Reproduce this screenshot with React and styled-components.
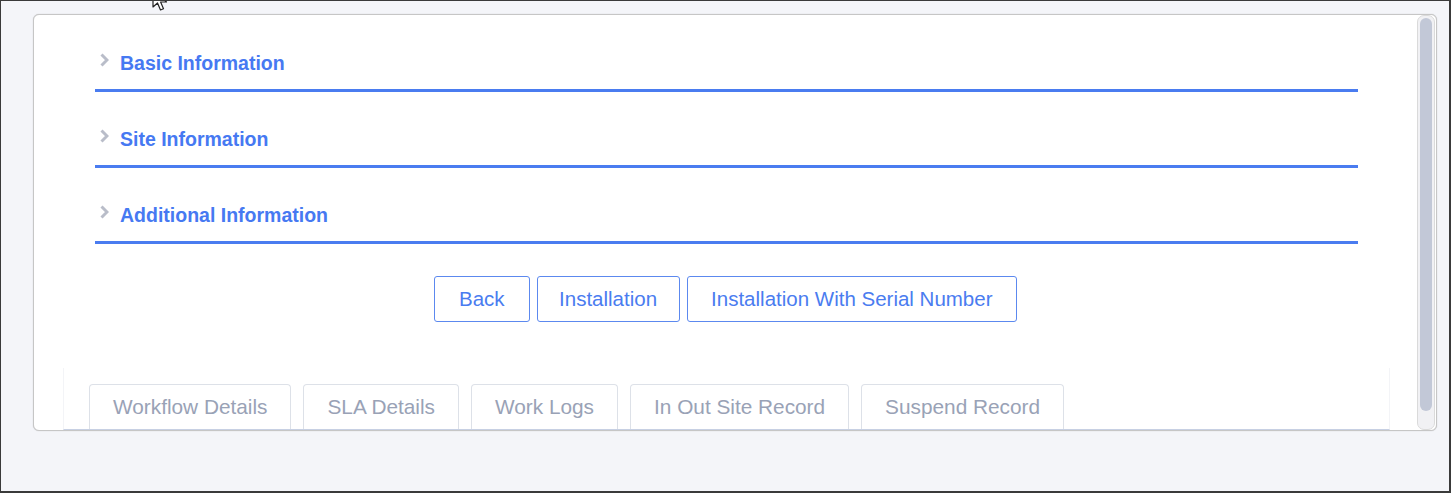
import React from 'react';
import styled, { createGlobalStyle } from 'styled-components';

const GlobalStyle = createGlobalStyle`
  body {
    margin: 0;
    font-family: "Liberation Sans", Arial, sans-serif;
  }
  * {
    box-sizing: border-box;
  }
`;

const Frame = styled.div`
  position: relative;
  width: 1451px;
  height: 493px;
  border: 1px solid #3a3a3a;
  border-right-width: 2px;
  border-bottom-width: 2px;
  background: #f4f5f9;
  padding: 13px 12px 0 32px;
  overflow: hidden;
`;

const Card = styled.div`
  display: flex;
  width: 1404px;
  height: 417px;
  background: #fff;
  border: 1px solid #c6c6c6;
  border-radius: 6px;
  box-shadow: 0 0 1px rgba(0, 0, 0, 0.25);
  overflow: hidden;
`;

const Content = styled.div`
  flex: 1;
  overflow: hidden;
  padding-top: 1px;
`;

const Sections = styled.div`
  padding: 0 59px 0 61px;
`;

const SectionHeader = styled.div`
  display: flex;
  align-items: flex-end;
  gap: 11px;
  height: 76px;
  padding: 0 0 15px 4px;
  border-bottom: 3px solid #4a7cf0;
  cursor: pointer;
`;

const Title = styled.span`
  font-size: 19.5px;
  line-height: 22px;
  font-weight: 700;
  color: #4679f2;
`;

const Chevron = styled.svg`
  width: 10px;
  height: 16px;
  margin-bottom: 6px;
`;

const Actions = styled.div`
  display: flex;
  justify-content: center;
  gap: 7px;
  margin-top: 32px;
`;

const Button = styled.button`
  height: 46px;
  padding: 0 ${p => p.$pad}px;
  background: #fff;
  border: 1px solid #5c89ef;
  border-radius: 3px;
  color: #4a7cf0;
  font-family: "Liberation Sans", Arial, sans-serif;
  font-size: 20.5px;
`;

const TabBar = styled.div`
  display: flex;
  gap: 12px;
  margin: 46px 27px 0 29px;
  padding: 16px 0 0 25px;
  border-left: 1px solid #f3f4f7;
  border-right: 1px solid #f3f4f7;
  border-bottom: 1px solid #c7d0e3;
`;

const Tab = styled.div`
  display: flex;
  align-items: center;
  height: 45px;
  padding: 0 23px;
  border: 1px solid #dde1e8;
  border-bottom: none;
  border-radius: 4px 4px 0 0;
  color: #99a2b6;
  font-size: 20.8px;
  white-space: nowrap;
`;

const ScrollTrack = styled.div`
  width: 18px;
  margin: 0 1px 0 0;
  padding: 2px 2px;
  background: #f1f1f4;
  border: 1px solid #dadada;
  border-radius: 7px;
`;

const Thumb = styled.div`
  height: 393px;
  background: #c2c8d7;
  border-radius: 7px;
`;

const Cursor = styled.svg`
  position: absolute;
  left: 150px;
  top: -13px;
  width: 20px;
  height: 26px;
`;

const sections = ['Basic Information', 'Site Information', 'Additional Information'];
const buttons = [
  { label: 'Back', pad: 24 },
  { label: 'Installation', pad: 21.5 },
  { label: 'Installation With Serial Number', pad: 23.5 },
];
const tabs = ['Workflow Details', 'SLA Details', 'Work Logs', 'In Out Site Record', 'Suspend Record'];

const App = () => {
  return (
    <Frame>
      <GlobalStyle />
      <Card>
        <Content>
          <Sections>
            {sections.map(name => (
              <SectionHeader key={name}>
                <Chevron viewBox="0 0 10 16">
                  <path d="M2.5 2.5 L8 8 L2.5 13.5" fill="none" stroke="#b9bdc9" strokeWidth="3" />
                </Chevron>
                <Title>{name}</Title>
              </SectionHeader>
            ))}
          </Sections>
          <Actions>
            {buttons.map(b => (
              <Button key={b.label} $pad={b.pad}>{b.label}</Button>
            ))}
          </Actions>
          <TabBar>
            {tabs.map(label => (
              <Tab key={label}>{label}</Tab>
            ))}
          </TabBar>
        </Content>
        <ScrollTrack>
          <Thumb />
        </ScrollTrack>
      </Card>
      {/* mouse pointer caught in the screenshot */}
      <Cursor viewBox="0 0 20 26">
        <path d="M2 1 L2 19 L6.5 15 L9.5 22 L12.5 20.8 L9.6 14 L15.5 14 Z" fill="#fff" stroke="#222" strokeWidth="1.2" strokeLinejoin="round" />
      </Cursor>
    </Frame>
  );
};

export default App;
